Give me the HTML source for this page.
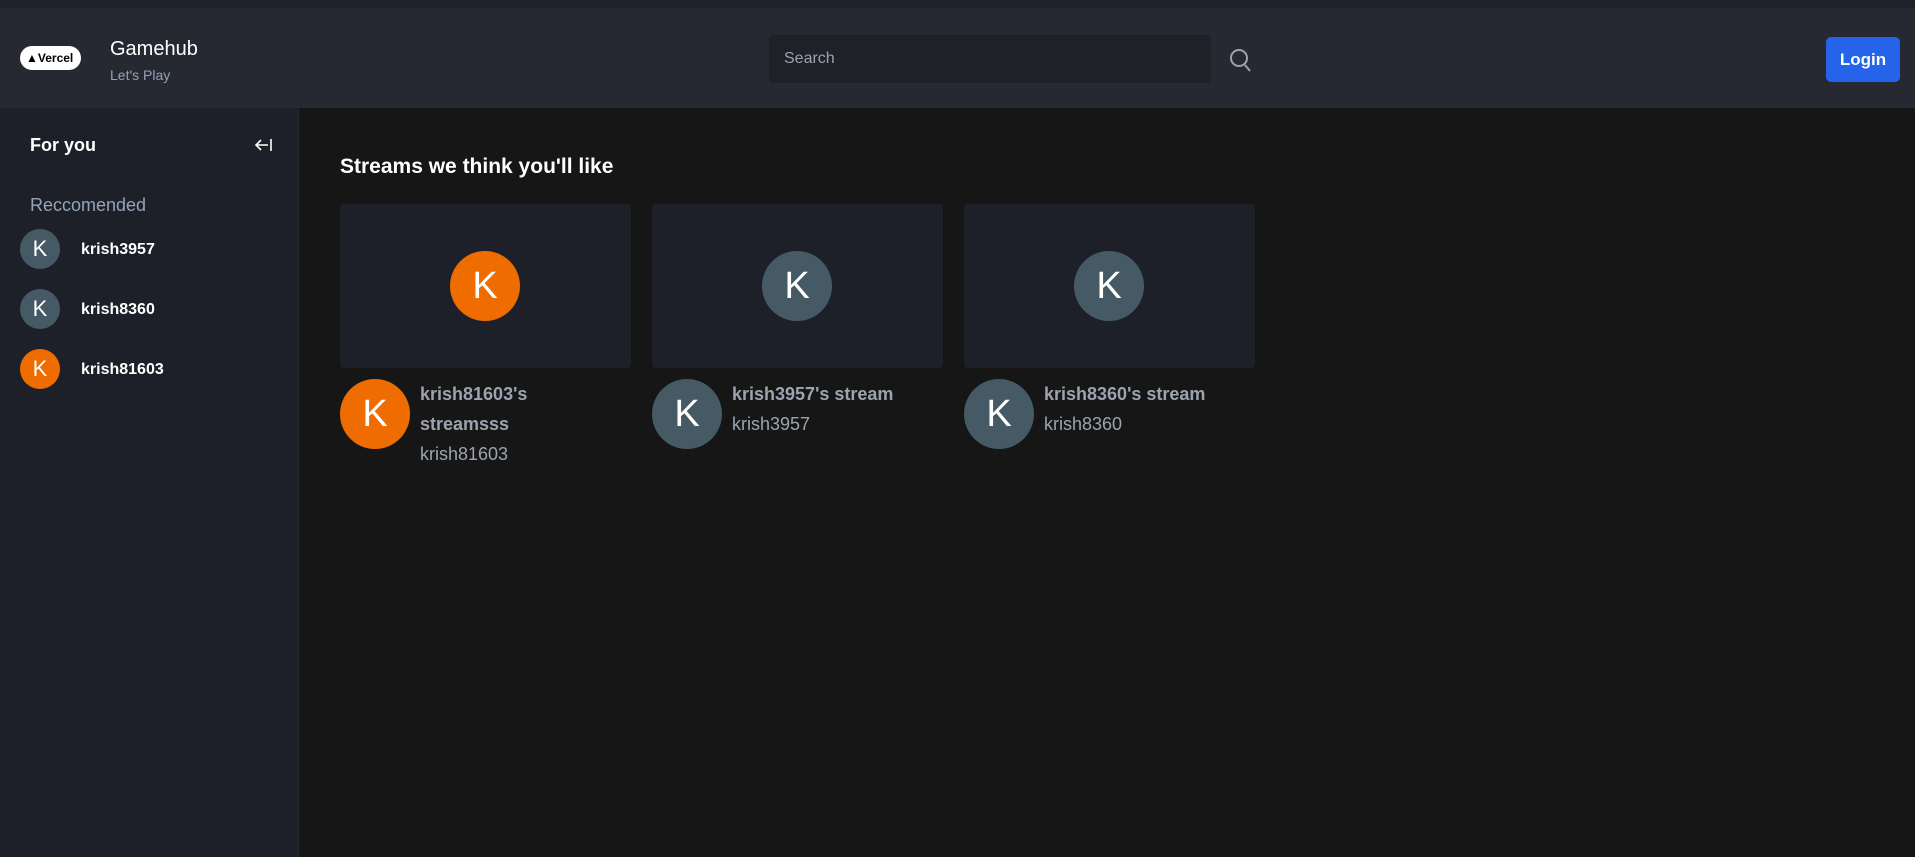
<!DOCTYPE html>
<html><head><meta charset="utf-8"><style>
*{margin:0;padding:0;box-sizing:border-box}
body{width:1915px;height:857px;background:#161616;font-family:"Liberation Sans",sans-serif;position:relative;overflow:hidden;color:#fff}
.top{position:absolute;left:0;top:0;width:1915px;height:8px;background:#1f2129}
.hdr{position:absolute;left:0;top:8px;width:1915px;height:100px;background:#262932}
.side{position:absolute;left:0;top:108px;width:299px;height:749px;background:#1e2029;border-right:1px solid #262932}
.abs{position:absolute}
.av{position:absolute;border-radius:50%;color:#fff;display:flex;align-items:center;justify-content:center}
.g{background:#455a64}.o{background:#ef6c00}
.card{position:absolute;top:204px;width:291px;height:164px;background:#1e2029;border-radius:4px}
.t{position:absolute;font-size:18px;line-height:30px;color:#9ca3af}
</style></head><body>
<div class="top"></div>
<div class="hdr">
  <div class="abs" style="left:20px;top:38px;width:61px;height:24px;background:#fff;border-radius:12px;color:#000;font-weight:bold;font-size:12px;line-height:24px;padding-left:6px">▲Vercel</div>
  <div class="abs" style="left:110px;top:30px;font-size:20px">Gamehub</div>
  <div class="abs" style="left:110px;top:59px;font-size:14px;color:#94a3b8">Let's Play</div>
  <div class="abs" style="left:769px;top:27px;width:442px;height:48px;background:#1f2129;border-radius:4px;color:#9ca3af;font-size:16px;line-height:48px;padding-left:15px">Search</div>
  <svg class="abs" style="left:1229px;top:40px" width="24" height="26" viewBox="0 0 24 26" fill="none" stroke="#9ca3af" stroke-width="2"><circle cx="10" cy="10" r="8"/><path d="M16 17l5 6"/></svg>
  <div class="abs" style="left:1826px;top:29px;width:74px;height:45px;background:#2563eb;border-radius:5px;font-weight:bold;font-size:17px;line-height:45px;text-align:center">Login</div>
</div>
<div class="side">
  <div class="abs" style="left:30px;top:27px;font-size:18px;font-weight:bold">For you</div>
  <svg class="abs" style="left:254px;top:28px" width="20" height="18" viewBox="0 0 20 18" fill="none" stroke="#fff" stroke-width="1.6"><path d="M2 9h12M7 4L2 9l5 5M17 3v12"/></svg>
  <div class="abs" style="left:30px;top:87px;font-size:18px;color:#94a3b8">Reccomended</div>
  <div class="av g" style="left:20px;top:121px;width:40px;height:40px;font-size:22px">K</div>
  <div class="abs" style="left:81px;top:133px;font-size:16px;font-weight:bold">krish3957</div>
  <div class="av g" style="left:20px;top:181px;width:40px;height:40px;font-size:22px">K</div>
  <div class="abs" style="left:81px;top:193px;font-size:16px;font-weight:bold">krish8360</div>
  <div class="av o" style="left:20px;top:241px;width:40px;height:40px;font-size:22px">K</div>
  <div class="abs" style="left:81px;top:253px;font-size:16px;font-weight:bold">krish81603</div>
</div>
<div class="abs" style="left:340px;top:155px;font-size:21px;font-weight:bold">Streams we think you'll like</div>
<div class="card" style="left:340px"><div class="av o" style="left:110px;top:47px;width:70px;height:70px;font-size:38px">K</div></div>
<div class="card" style="left:652px"><div class="av g" style="left:110px;top:47px;width:70px;height:70px;font-size:38px">K</div></div>
<div class="card" style="left:964px"><div class="av g" style="left:110px;top:47px;width:70px;height:70px;font-size:38px">K</div></div>
<div class="av o" style="left:340px;top:379px;width:70px;height:70px;font-size:38px">K</div>
<div class="t" style="left:420px;top:379px;font-weight:bold">krish81603's<br>streamsss</div>
<div class="t" style="left:420px;top:439px">krish81603</div>
<div class="av g" style="left:652px;top:379px;width:70px;height:70px;font-size:38px">K</div>
<div class="t" style="left:732px;top:379px;font-weight:bold">krish3957's stream</div>
<div class="t" style="left:732px;top:409px">krish3957</div>
<div class="av g" style="left:964px;top:379px;width:70px;height:70px;font-size:38px">K</div>
<div class="t" style="left:1044px;top:379px;font-weight:bold">krish8360's stream</div>
<div class="t" style="left:1044px;top:409px">krish8360</div>
</body></html>
